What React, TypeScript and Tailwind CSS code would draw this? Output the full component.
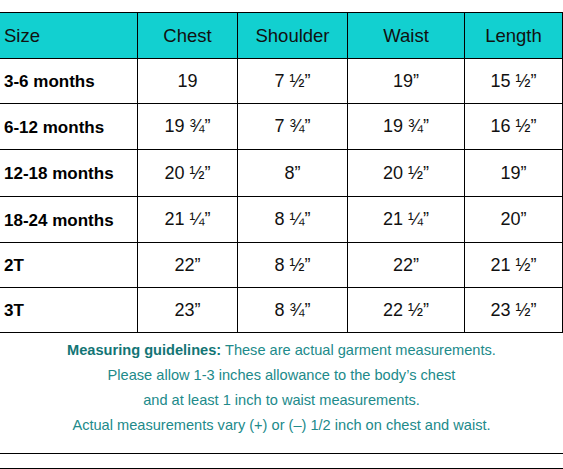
const headers = ['Size', 'Chest', 'Shoulder', 'Waist', 'Length'];

const rows: { label: string; values: string[]; h: string }[] = [
  { label: '3-6 months', values: ['19', '7 ½”', '19”', '15 ½”'], h: 'h-[45px]' },
  { label: '6-12 months', values: ['19 ¾”', '7 ¾”', '19 ¾”', '16 ½”'], h: 'h-[46px]' },
  { label: '12-18 months', values: ['20 ½”', '8”', '20 ½”', '19”'], h: 'h-[47px]' },
  { label: '18-24 months', values: ['21 ¼”', '8 ¼”', '21 ¼”', '20”'], h: 'h-[46px]' },
  { label: '2T', values: ['22”', '8 ½”', '22”', '21 ½”'], h: 'h-[45px]' },
  { label: '3T', values: ['23”', '8 ¾”', '22 ½”', '23 ½”'], h: 'h-[45px]' },
];

const cols = 'grid grid-cols-[138px_100px_110px_117px_98px]';

export default function App() {
  return (
    <div className="w-[563px] h-[469px] bg-white overflow-hidden font-['Liberation_Sans',Arial,sans-serif] text-[#111]">
      <div className="pt-[12px]">
        {/* header */}
        <div className={`${cols} h-[47px] bg-[#12d0d0] border-y border-black`}>
          {headers.map((h, i) => (
            <div
              key={h}
              className={`flex items-center border-r border-black text-[18.5px] ${i === 0 ? 'pl-[4px]' : 'justify-center'}`}
            >
              {h}
            </div>
          ))}
        </div>

        {rows.map((r) => (
          <div key={r.label} className={`${cols} ${r.h} border-b border-black`}>
            <div className="flex items-center pl-[4px] pt-[2px] border-r border-black text-[17px] font-bold text-black">
              {r.label}
            </div>
            {r.values.map((v, i) => (
              <div key={i} className="flex items-center justify-center border-r border-black text-[18px]">
                {v}
              </div>
            ))}
          </div>
        ))}
      </div>

      {/* guidelines */}
      <div className="pt-[5px] text-center text-[14.6px] leading-[25px] text-[#218a8a]">
        <p>
          <span className="font-bold text-[#137575]">Measuring guidelines:</span> These are actual garment measurements.
        </p>
        <p>Please allow 1-3 inches allowance to the body’s chest</p>
        <p>and at least 1 inch to waist measurements.</p>
        <p>Actual measurements vary (+) or (–) 1/2 inch on chest and waist.</p>
      </div>

      <div className="mt-[15px] border-t border-black" />
      <div className="mt-[14px] border-t border-black" />
    </div>
  );
}
